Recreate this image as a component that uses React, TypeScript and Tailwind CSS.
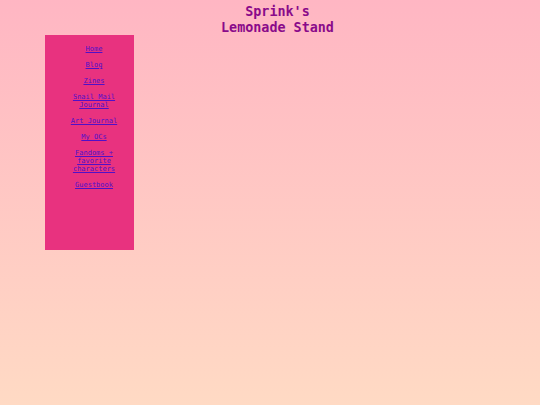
import React from "react";

const links = [
  "Home",
  "Blog",
  "Zines",
  "Snail Mail Journal",
  "Art Journal",
  "My OCs",
  "Fandoms + favorite characters",
  "Guestbook",
];

export default function App() {
  return (
    <div className="min-h-[405px] w-full bg-gradient-to-b from-[#ffb6c3] to-[#ffdac4] font-['DejaVu_Sans_Mono',monospace]">
      {/* header */}
      <header className="h-[35px] pt-[4px] pl-[15px] text-center text-[13.4px] leading-[16px] font-bold text-[#8a0a8a]">
        <div>Sprink's</div>
        <div>Lemonade Stand</div>
      </header>

      {/* sidebar */}
      <nav className="ml-[45px] h-[215px] w-[89px] bg-[#e8327f] pt-[10px] pl-[14px] pr-[5px]">
        <ul className="flex flex-col gap-[8px] text-center text-[7px] leading-[8px]">
          {links.map((l) => (
            <li key={l}>
              <a href="#" className="text-[#5010c8] underline">
                {l}
              </a>
            </li>
          ))}
        </ul>
      </nav>
    </div>
  );
}
